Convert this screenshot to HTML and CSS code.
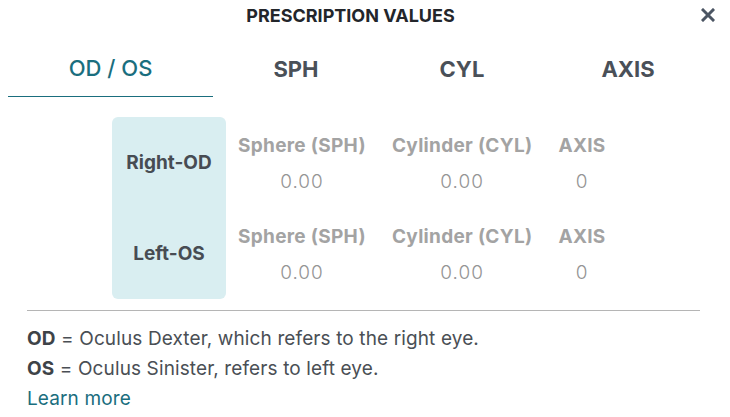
FILE: index.html
```html
<!DOCTYPE html>
<html lang="en">
<head>
<meta charset="utf-8">
<title>Prescription Values</title>
<link rel="stylesheet" href="styles.css">
</head>
<body>
<div class="modal">
  <div class="header">
    <h1 class="title">PRESCRIPTION VALUES</h1>
    <button class="close" aria-label="Close">
      <svg width="14" height="14" viewBox="0 0 14 14"><path d="M2 2L12 12M12 2L2 12" stroke="#4b5563" stroke-width="3" stroke-linecap="square"/></svg>
    </button>
  </div>
  <div class="tabs">
    <div class="tab tab-active">OD / OS</div>
    <div class="tab">SPH</div>
    <div class="tab">CYL</div>
    <div class="tab">AXIS</div>
  </div>
  <div class="table">
    <div class="labels">
      <div class="label">Right-OD</div>
      <div class="label">Left-OS</div>
    </div>
    <div class="rows">
      <div class="row">
        <div class="cell"><div class="head">Sphere (SPH)</div><div class="val">0.00</div></div>
        <div class="cell"><div class="head">Cylinder (CYL)</div><div class="val">0.00</div></div>
        <div class="cell"><div class="head">AXIS</div><div class="val">0</div></div>
      </div>
      <div class="row">
        <div class="cell"><div class="head">Sphere (SPH)</div><div class="val">0.00</div></div>
        <div class="cell"><div class="head">Cylinder (CYL)</div><div class="val">0.00</div></div>
        <div class="cell"><div class="head">AXIS</div><div class="val">0</div></div>
      </div>
    </div>
  </div>
  <div class="footer">
    <p><b>OD</b> = Oculus Dexter, which refers to the right eye.</p>
    <p><b>OS</b> = Oculus Sinister, refers to left eye.</p>
    <a class="learn" href="#">Learn more</a>
  </div>
</div>
</body>
</html>
```
FILE: styles.css
```css
* { box-sizing: border-box; }
html, body { margin: 0; padding: 0; background: #fff; }
body { font-family: Inter, "Noto Sans", sans-serif; color: #4a4f55; }
.modal { width: 730px; height: 417px; overflow: hidden; }
.header {
  display: flex;
  align-items: center;
  height: 30px;
}
.title {
  flex: 1;
  margin: 0;
  text-align: center;
  font-size: 18px;
  font-weight: 700;
  color: #23262b;
}
.close {
  margin-right: 15px;
  background: none;
  border: 0;
  padding: 0;
  width: 14px;
  height: 14px;
  display: flex;
}
.tabs {
  display: flex;
  margin: 10px 19px 0 8px;
}
.tab {
  flex: 166 0 0;
  height: 57px;
  display: flex;
  align-items: center;
  justify-content: center;
  font-size: 22px;
  font-weight: 700;
  color: #4a5058;
}
.tab-active {
  flex: 205 0 0;
  color: #1a6e7e;
  font-weight: 500;
  border-bottom: 1.5px solid #1a6e7e;
}
.table {
  display: flex;
  margin: 20px 0 0 112px;
}
.labels {
  width: 114px;
  background: #d9eef1;
  border-radius: 6px;
  display: flex;
  flex-direction: column;
}
.label {
  height: 91px;
  display: flex;
  align-items: center;
  justify-content: center;
  font-size: 19px;
  font-weight: 700;
  color: #474c53;
}
.rows { display: flex; flex-direction: column; padding-left: 12px; }
.row {
  display: flex;
  gap: 26px;
  height: 91px;
  padding-top: 18px;
}
.cell { display: flex; flex-direction: column; align-items: center; }
.head {
  font-size: 19px;
  font-weight: 700;
  color: #a3a3a3;
  line-height: 22px;
  letter-spacing: 0.3px;
}
.val {
  margin-top: 14px;
  font-size: 19px;
  font-weight: 300;
  color: #959595;
  line-height: 22px;
  letter-spacing: 1px;
}
.footer {
  margin: 11px 30px 0 27px;
  border-top: 1px solid #b5b5b5;
  padding-top: 13px;
  font-size: 19px;
  line-height: 30px;
  letter-spacing: 0.12px;
}
.footer p { margin: 0; color: #4a4f55; }
.footer b { color: #3e4348; }
.learn { color: #1a6e7e; text-decoration: none; }
```
